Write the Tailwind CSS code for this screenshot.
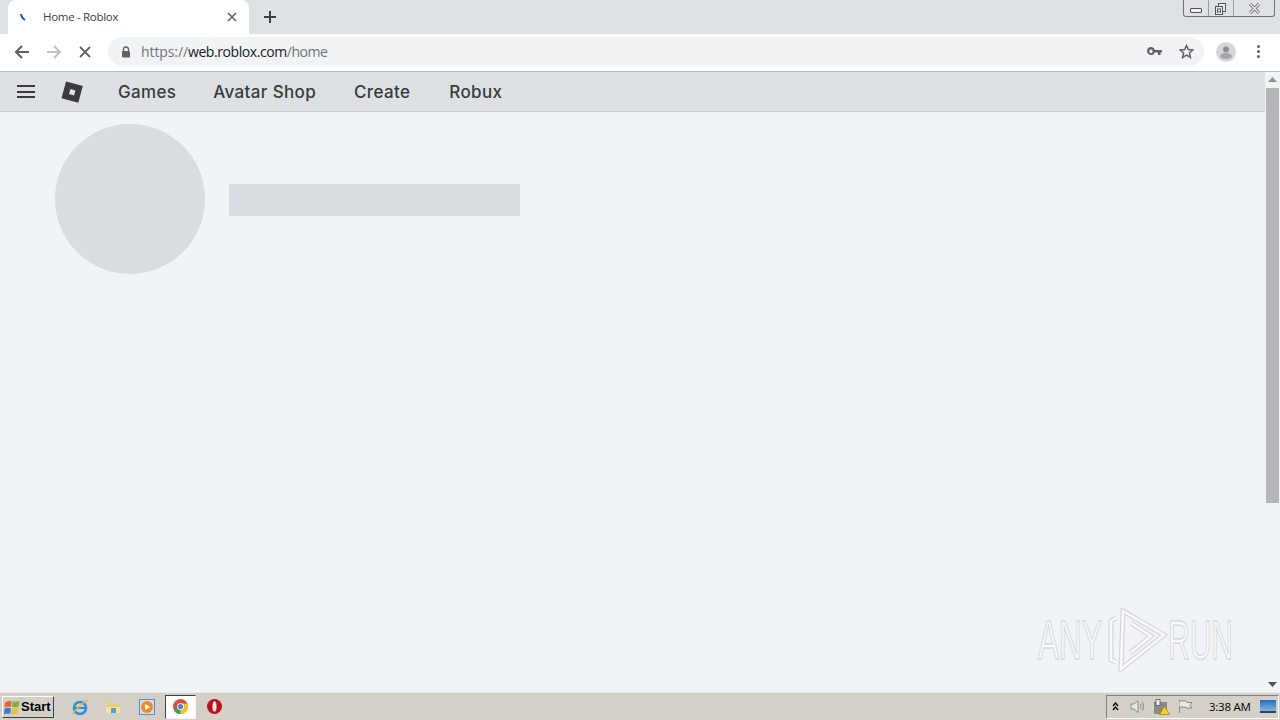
<!DOCTYPE html>
<html lang="en">
<head>
  <meta charset="UTF-8">
  <title>Home - Roblox</title>
  <script src="https://cdn.jsdelivr.net/npm/@tailwindcss/browser@4"></script>
</head>
<body class="w-[1280px] h-[720px] overflow-hidden relative flex flex-col bg-[#f0f4f7] font-['Liberation_Sans',sans-serif]">

  <!-- tab strip -->
  <div class="h-[34px] shrink-0 bg-[#dee1e6] flex items-end pl-2">
    <div class="w-[241px] h-[34px] bg-white rounded-t-lg flex items-center">
      <svg class="ml-[11px] w-[8px] h-[10px]" viewBox="0 0 8 10"><path d="M2 2 Q2.5 6 6 8" fill="none" stroke="#1a5fb4" stroke-width="2"/></svg>
      <span class="ml-[16px] text-[11.5px] text-[#3c4043] font-['Open_Sans',sans-serif] tracking-[-0.3px]">Home - Roblox</span>
      <svg class="ml-auto mr-[12px] w-[10px] h-[10px]" viewBox="0 0 10 10"><path d="M1 1 L9 9 M9 1 L1 9" stroke="#5f6368" stroke-width="1.6"/></svg>
    </div>
    <svg class="ml-[15px] mb-[11px] w-[12px] h-[12px]" viewBox="0 0 12 12"><path d="M6 0 V12 M0 6 H12" stroke="#3c4043" stroke-width="2"/></svg>
    <div class="ml-auto mr-[5px] self-start w-[92px] h-[17px] flex border border-t-0 border-[#6f7276] rounded-b-[3px]">
      <div class="w-[25px] flex items-end justify-center pb-[3px] border-r border-[#9a9da1]"><div class="w-[12px] h-[5px] border border-[#555] rounded-[1px] bg-white/60"></div></div>
      <div class="w-[25px] flex items-center justify-center border-r border-[#9a9da1] pr-[2px]">
        <svg class="w-[13px] h-[13px]" viewBox="0 0 13 13" fill="none" stroke="#555"><rect x="4.5" y="1.5" width="7" height="8" fill="#e8eaee"/><rect x="1.5" y="4.5" width="7" height="8" fill="#e8eaee"/><rect x="3.5" y="7" width="3" height="3"/></svg>
      </div>
      <div class="flex-1 flex items-center justify-center">
        <svg class="w-[13px] h-[11px]" viewBox="0 0 13 11" fill="none"><path d="M2 1 L11 10 M11 1 L2 10" stroke="#666" stroke-width="3"/><path d="M2 1 L11 10 M11 1 L2 10" stroke="#eee" stroke-width="1.4"/></svg>
      </div>
    </div>
  </div>

  <!-- toolbar -->
  <div class="h-[38px] shrink-0 bg-white border-b border-[#b9bbbe] flex items-center pb-[2px]">
    <svg class="ml-[14px] w-[16px] h-[14px]" viewBox="0 0 16 14" fill="none" stroke="#5a5d61" stroke-width="2"><path d="M15 7 H2 M8 1 L2 7 L8 13"/></svg>
    <svg class="ml-[16px] w-[16px] h-[14px]" viewBox="0 0 16 14" fill="none" stroke="#bdc1c6" stroke-width="2"><path d="M1 7 H14 M8 1 L14 7 L8 13"/></svg>
    <svg class="ml-[17px] w-[12px] h-[12px]" viewBox="0 0 12 12"><path d="M1 1 L11 11 M11 1 L1 11" stroke="#5f6368" stroke-width="1.8"/></svg>
    <div class="ml-[17px] w-[1096px] h-[29px] rounded-full bg-[#f1f3f4] flex items-center">
      <svg class="ml-[13px] w-[10px] h-[12px]" viewBox="0 0 10 12"><path d="M2.5 5 V3.5 a2.5 2.5 0 0 1 5 0 V5" fill="none" stroke="#5f6368" stroke-width="1.3"/><rect x="1" y="5" width="8" height="6.5" rx="1" fill="#5f6368"/></svg>
      <span class="ml-[10px] text-[14px] text-[#70757a] font-['Open_Sans',sans-serif] tracking-[-0.1px]">https://<span class="text-[#202124] tracking-[-0.42px]">web.roblox.com</span><span class="tracking-[-0.5px]">/home</span></span>
      <svg class="ml-auto w-[15px] h-[9px]" viewBox="0 0 15 9" fill="#5f6368"><path d="M4 0 a4 4 0 0 1 3.8 3 H15 V5.5 H13.5 V8 H11 V5.5 H7.8 A4 4 0 1 1 4 0 Z M4 2.6 a1.7 1.7 0 1 0 .01 0 Z" fill-rule="evenodd"/></svg>
      <svg class="ml-[17px] mr-[10px] w-[15px] h-[15px]" viewBox="0 0 15 15" fill="none" stroke="#5f6368" stroke-width="1.5"><path d="M7.5 1.5 L9.3 5.6 L13.8 6 L10.4 9 L11.4 13.4 L7.5 11.1 L3.6 13.4 L4.6 9 L1.2 6 L5.7 5.6 Z"/></svg>
    </div>
    <svg class="ml-[12px] w-[20px] h-[20px]" viewBox="0 0 20 20"><circle cx="10" cy="10" r="10" fill="#d5d7da"/><circle cx="10" cy="7.5" r="3" fill="#8a8d91"/><ellipse cx="10" cy="14" rx="6" ry="3" fill="#a3a6a9"/></svg>
    <div class="ml-[21px] flex flex-col gap-[2px]">
      <div class="w-[3px] h-[3px] rounded-full bg-[#5f6368]"></div>
      <div class="w-[3px] h-[3px] rounded-full bg-[#5f6368]"></div>
      <div class="w-[3px] h-[3px] rounded-full bg-[#5f6368]"></div>
    </div>
  </div>

  <!-- page + scrollbar -->
  <div class="flex-1 min-h-0 flex">
    <div class="flex-1 min-w-0 flex flex-col">
      <nav class="h-[40px] shrink-0 bg-[#dee1e3] border-b border-[#c9cccf] flex items-center text-[#393b3d] font-['Inter',sans-serif] font-medium text-[17px] tracking-[0.35px]">
        <div class="ml-[17px] w-[18px] flex flex-col gap-[3.5px]">
          <div class="h-[2px] bg-[#393b3d]"></div>
          <div class="h-[2px] bg-[#393b3d]"></div>
          <div class="h-[2px] bg-[#393b3d]"></div>
        </div>
        <svg class="ml-[26px] w-[22px] h-[22px]" viewBox="0 0 22 22"><path fill-rule="evenodd" fill="#393b3d" d="M5 0.5 L21.8 5 L17.3 21.8 L0.5 17.3 Z M9.5 8 L8 13 L13 14.5 L14.5 9.5 Z"/></svg>
        <a class="ml-[35px] mt-[2px]">Games</a>
        <a class="ml-[37px] mt-[2px]">Avatar Shop</a>
        <a class="ml-[38px] mt-[2px]">Create</a>
        <a class="ml-[39px] mt-[2px]">Robux</a>
      </nav>
      <div class="flex-1 pl-[55px] pt-[12px]">
        <div class="flex items-center gap-[24px]">
          <div class="w-[150px] h-[150px] rounded-full bg-[#d9dce0]"></div>
          <div class="w-[291px] h-[32px] mt-[2px] bg-[#d9dce0]"></div>
        </div>
      </div>
    </div>
    <div class="w-[15px] shrink-0 bg-[#f0f4f7] flex flex-col items-center">
      <svg class="mt-[5px] w-[9px] h-[5px]" viewBox="0 0 9 5"><path d="M4.5 0 L9 5 H0 Z" fill="#8f9296"/></svg>
      <div class="mt-[6px] w-[13px] h-[415px] bg-[#b4b6b8]"></div>
      <svg class="mt-auto mb-[5px] w-[9px] h-[5px]" viewBox="0 0 9 5"><path d="M4.5 5 L9 0 H0 Z" fill="#505356"/></svg>
    </div>
  </div>

  <!-- taskbar -->
  <div class="h-[28px] shrink-0 bg-[#d4d0c8] border-t border-[#ecebe6] flex items-center">
    <div class="ml-[2px] w-[52px] h-[22px] bg-[#d4d0c8] border border-t-white border-l-white border-r-[#404040] border-b-[#404040] flex items-center gap-[1px] pl-[1px]">
      <svg class="w-[16px] h-[16px]" viewBox="0 0 14 14"><path d="M1 3 Q4 1 6.5 2 L6 7 Q3 6 0.5 7.5 Z" fill="#e8622a"/><path d="M7.5 2 Q10 3 13.5 1.5 L13 6.5 Q10 7.5 7 7 Z" fill="#7fb23a"/><path d="M0.5 8.5 Q3 7 6 8 L5.5 13 Q3 12 0 13.5 Z" fill="#3d7bd0"/><path d="M7 8 Q10 8.5 13 7.5 L12.5 12.5 Q9.5 13.5 6.5 13 Z" fill="#eec03a"/></svg>
      <span class="text-[13px] font-bold text-black">Start</span>
    </div>
    <!-- ie -->
    <svg class="ml-[17px] w-[18px] h-[18px]" viewBox="0 0 18 18" fill="none"><circle cx="9" cy="10" r="6" stroke="#2f8fd8" stroke-width="2.6"/><path d="M4 10 H14" stroke="#2f8fd8" stroke-width="2"/><path d="M3 15 Q0 17 6 11 Q12 4 17 2" stroke="#e8b92e" stroke-width="1.3"/></svg>
    <!-- explorer -->
    <svg class="ml-[16px] w-[16px] h-[16px]" viewBox="0 0 16 16"><path d="M1 3 H7 L8 5 H15 V14 H1 Z" fill="#e9cf7a"/><rect x="1" y="8" width="14" height="6" fill="#f2e2a4"/><rect x="6" y="9" width="5" height="5" fill="#5aa0c8"/></svg>
    <!-- media player -->
    <div class="ml-[18px] w-[16px] h-[16px] border border-[#5b8ec9] bg-[#cfe0f2] flex items-center justify-center">
      <div class="w-[12px] h-[12px] rounded-full bg-[#f08a1d] flex items-center justify-center">
        <svg class="w-[6px] h-[6px]" viewBox="0 0 6 6"><path d="M1 0 L6 3 L1 6 Z" fill="#fff"/></svg>
      </div>
    </div>
    <!-- chrome, active -->
    <div class="ml-[10px] w-[31px] h-[24px] bg-white border border-t-[#404040] border-l-[#404040] border-r-[#f5f5f5] border-b-[#f5f5f5] flex items-center justify-center">
      <svg class="w-[15px] h-[15px]" viewBox="0 0 16 16"><circle cx="8" cy="8" r="8" fill="#dd4b3e"/><path d="M8 8 L1 12 A8 8 0 0 0 8 16 L12 8 Z" fill="#3aa757"/><path d="M8 8 L8 16 A8 8 0 0 0 15.5 5 H8 Z" fill="#f6c02d"/><circle cx="8" cy="8" r="3.6" fill="#fff"/><circle cx="8" cy="8" r="2.8" fill="#4a82e8"/></svg>
    </div>
    <!-- opera -->
    <svg class="ml-[11px] w-[15px] h-[15px]" viewBox="0 0 15 15"><circle cx="7.5" cy="7.5" r="7.5" fill="#b81419"/><ellipse cx="7.5" cy="7.5" rx="2" ry="5.2" fill="#f6e9e9"/></svg>

    <!-- tray -->
    <div class="ml-auto mr-[1px] w-[173px] h-[24px] border border-t-[#808080] border-l-[#808080] border-r-white border-b-white flex items-center">
      <svg class="ml-[5px] w-[7px] h-[9px]" viewBox="0 0 7 9" fill="none" stroke="#000" stroke-width="1.3"><path d="M1 4 L3.5 1 L6 4 M1 8 L3.5 5 L6 8"/></svg>
      <svg class="ml-[11px] w-[16px] h-[15px]" viewBox="0 0 16 15" fill="none" stroke="#8a8a8a"><path d="M1 5 H4 L8 1.5 V13.5 L4 10 H1 Z" fill="#e6e6e6"/><path d="M10.5 5 Q12 7.5 10.5 10 M12.5 3 Q15 7.5 12.5 12"/></svg>
      <svg class="ml-[7px] w-[17px] h-[16px]" viewBox="0 0 17 16"><rect x="1" y="3" width="13" height="12" fill="#8b8b85"/><rect x="3" y="0.5" width="4" height="6" fill="#eee" stroke="#555" stroke-width=".8"/><path d="M11.5 7 L16.5 15.5 H6.5 Z" fill="#f4cf2c" stroke="#8a6d00" stroke-width=".6"/></svg>
      <svg class="ml-[7px] w-[16px] h-[15px]" viewBox="0 0 16 15" fill="none" stroke="#888"><path d="M2.5 1 V14"/><path d="M2.5 2 H9 L10 3.5 H15 L13 6.5 L15 9 H9 L8 8 H2.5" fill="#ebe8e0"/></svg>
      <span class="ml-[16px] text-[11.5px] text-black font-['Open_Sans',sans-serif] tracking-[-0.25px]">3:38 AM</span>
      <div class="ml-auto mr-[2px] w-[16px] h-[13px] bg-gradient-to-b from-[#1f6fc0] to-[#7fb2de] border-b-2 border-[#33435a]"></div>
    </div>
  </div>

  <!-- watermark over the page -->
  <div class="absolute left-[1038px] top-[608px] w-[195px] h-[64px] flex items-center text-[56px] leading-none text-[#f8fafb] [-webkit-text-stroke:1.5px_#d6dadd]">
    <span class="w-[68px] scale-x-[0.56] origin-left whitespace-nowrap">ANY</span>
    <svg class="w-[62px] h-[64px] shrink-0" viewBox="0 0 62 64" fill="none">
      <g stroke="#d4d8db" stroke-width="5"><path d="M10 10 L5 13 V52 L10 54"/><path d="M17 3 L58 27 L15 61 Z"/><path d="M25 15 L45 28 L24 45"/></g>
      <g stroke="#f8fafb" stroke-width="2.5"><path d="M10 10 L5 13 V52 L10 54"/><path d="M17 3 L58 27 L15 61 Z"/><path d="M25 15 L45 28 L24 45"/></g>
    </svg>
    <span class="w-[65px] scale-x-[0.535] origin-left whitespace-nowrap">RUN</span>
  </div>
</body>
</html>
